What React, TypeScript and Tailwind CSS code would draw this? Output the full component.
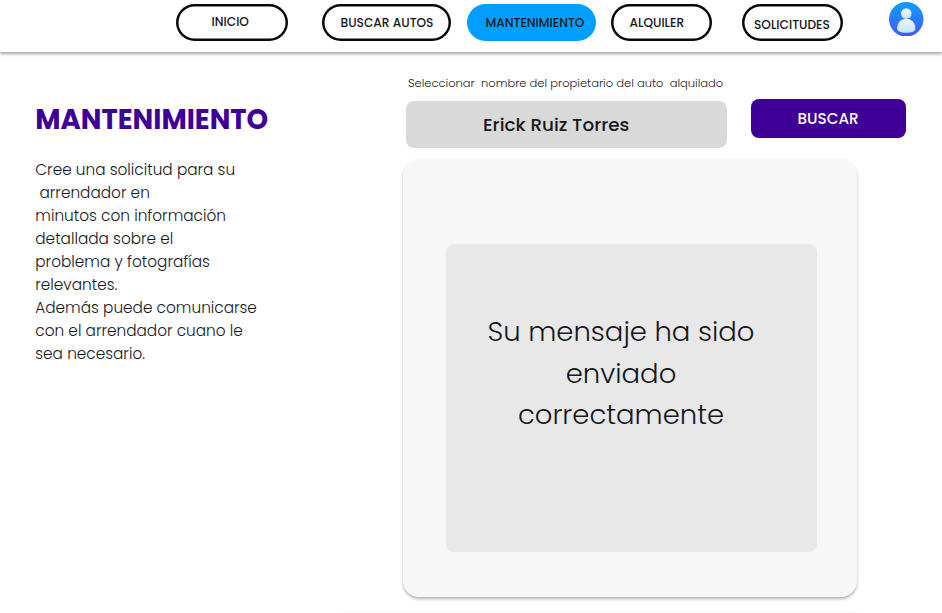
import React from "react";

function Avatar() {
  return (
    <svg className="ml-[46px] mt-[1.5px] size-[34.5px] shrink-0" viewBox="0 0 34 34">
      <defs>
        <linearGradient id="disc" x1="0" y1="0" x2="0" y2="1">
          <stop offset="0" stopColor="#08a2ff" />
          <stop offset="1" stopColor="#4a55f6" />
        </linearGradient>
        <linearGradient id="person" x1="0" y1="0" x2="0" y2="1">
          <stop offset="0" stopColor="#f4fbff" />
          <stop offset="1" stopColor="#c4e2fc" />
        </linearGradient>
      </defs>
      <circle cx="17" cy="17" r="17" fill="url(#disc)" />
      <circle cx="17" cy="11.300" r="5.200" fill="url(#person)" />
      <path d="M8 26c0-5.500 4-9.600 9-9.600s9 4.100 9 9.600c0 3-4 4.200-9 4.200s-9-1.200-9-4.200z" fill="url(#person)" />
    </svg>
  );
}

const pill = "flex h-[36.5px] shrink-0 mt-[4px] rounded-full whitespace-nowrap text-[12.2px] font-medium leading-4 text-[#16161c]";
const outlined = "shadow-[inset_0_0_0_2.5px_#08080a]";

export default function App() {
  return (
    <div className="h-[613px] w-[942px] overflow-hidden bg-white font-['Poppins','Inter',sans-serif] text-[#17171c]">
      <header className="flex h-[52px] items-start pl-[176px] shadow-[0_2px_3px_0px_rgba(0,0,0,0.36)]">
        <button className={`${pill} ${outlined} w-[112px] pl-[35.5px] pt-[9.5px]`}>INICIO</button>
        <button className={`${pill} ${outlined} ml-[34px] w-[129px] pl-[18.5px] pt-[10.5px]`}>BUSCAR AUTOS</button>
        <button className={`${pill} ml-[16px] w-[129px] bg-[#009fff] pl-[18.5px] pt-[10.5px]`}>MANTENIMIENTO</button>
        <button className={`${pill} ${outlined} ml-[15px] w-[101px] pl-[18.5px] pt-[10.5px]`}>ALQUILER</button>
        <button className={`${pill} ${outlined} ml-[30px] w-[101px] pl-[12px] pt-[12.5px]`}>SOLICITUDES</button>
        <Avatar />
      </header>
      <main className="flex items-start">
        <section className="w-[402px] shrink-0 pl-[35.3px] pt-[48px]">
          <h1 className="text-[27.5px] font-bold leading-[40px] text-[#3e0097]">MANTENIMIENTO</h1>
          <p className="mt-[18px] whitespace-pre text-[15.3px] font-light leading-[23px]">
            <span className="block">Cree una solicitud para su</span>
            <span className="block"> arrendador en</span>
            <span className="block">minutos con información</span>
            <span className="block">detallada sobre el</span>
            <span className="block">problema y fotografías</span>
            <span className="block">relevantes.</span>
            <span className="block">Además puede comunicarse</span>
            <span className="block">con el arrendador cuano le</span>
            <span className="block">sea necesario.</span>
          </p>
        </section>
        <section className="w-[540px] pl-[0.5px] pt-[23px]">
          <div className="flex items-start">
            <div className="ml-[3px] w-[321.5px]">
              <label className="block whitespace-pre pl-[2.5px] text-[11.49px] font-light leading-4">Seleccionar  nombre del propietario del auto  alquilado</label>
              <div className="mt-[10.4px] flex h-[47px] items-center rounded-lg bg-[#d9d9d9] pl-[77.5px] text-[18.33px] font-medium">Erick Ruiz Torres</div>
            </div>
            <button className="ml-[23.6px] mt-[23.6px] h-[39px] w-[155px] rounded-lg bg-[#3e0097] pt-[2px] text-[15.2px] font-medium text-white">BUSCAR</button>
          </div>
          <div className="mt-[11px] h-[438px] w-[454.5px] rounded-[16px] bg-[#f7f7f7] pl-[43.5px] pt-[84.6px] shadow-[0_2px_3px_rgba(0,0,0,0.3)]">
            <div className="h-[308px] w-[371px] rounded-lg bg-[#e8e8e8] pr-[21px] pt-[67.5px] text-center text-[27.5px] font-light leading-[41.3px]">
              <span className="block">Su mensaje ha sido</span>
              <span className="block">enviado</span>
              <span className="block">correctamente</span>
            </div>
          </div>
          <div className="-ml-[66px] mt-[16px] h-4 w-[520px] shadow-[0_0_4px_rgba(0,0,0,0.07)]" />
        </section>
      </main>
    </div>
  );
}
